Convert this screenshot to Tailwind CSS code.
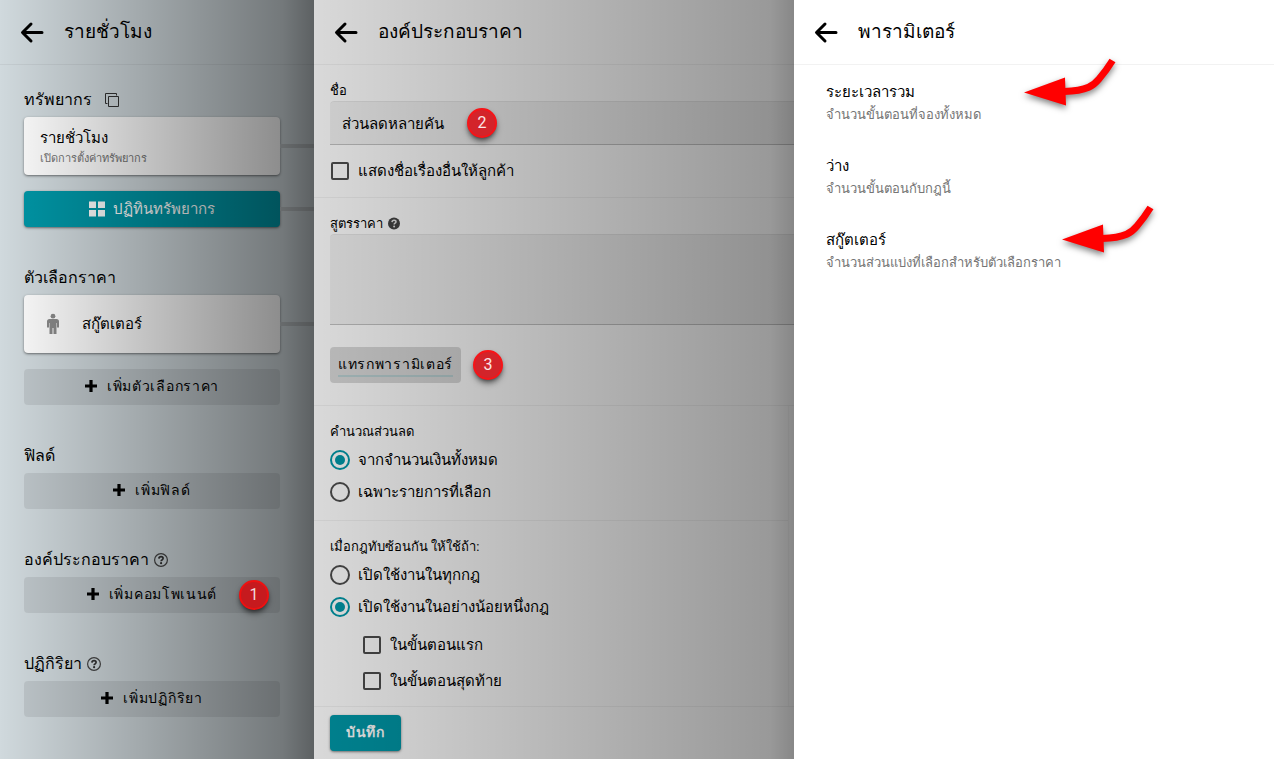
<!DOCTYPE html>
<html lang="th">
<head>
<meta charset="utf-8">
<title>องค์ประกอบราคา</title>
<script src="https://cdn.jsdelivr.net/npm/@tailwindcss/browser@4"></script>
</head>
<body class="h-screen overflow-hidden bg-white font-['Roboto','Liberation_Sans',sans-serif] text-[15px] text-black">

<svg class="hidden">
  <symbol id="back" viewBox="0 0 24 24"><path d="M22 12.500H3M11 4L2.500 12.500l8.500 8.500" fill="none" stroke="#000" stroke-width="3" stroke-linecap="round" stroke-linejoin="round"/></symbol>
  <symbol id="plus" viewBox="0 0 12 12"><path d="M4.400 0h3.200v4.400H12v3.200H7.600V12H4.400V7.600H0V4.400h4.400z"/></symbol>
  <symbol id="help" viewBox="0 0 16 16"><circle cx="8" cy="8" r="6.400" fill="none" stroke="#444" stroke-width="1.200"/><path d="M5.900 6.600q.1-2 2.200-2 2 0 2 1.700 0 1-1.100 1.600-.9.500-.9 1.400" fill="none" stroke="#333" stroke-width="1.700"/><circle cx="8.100" cy="11.200" r="1.100" fill="#333"/></symbol>
</svg>

<div class="flex h-full">

  <!-- Resource panel -->
  <section class="relative flex w-[314px] shrink-0 flex-col bg-[#d2dbdf]">
    <header class="flex h-[65px] shrink-0 items-center gap-5 border-b border-black/5 pl-5">
      <button type="button" aria-label="กลับ" class="size-6"><svg class="size-6"><use href="#back"/></svg></button>
      <h1 class="text-[19px]">รายชั่วโมง</h1>
    </header>
    <div class="flex flex-col gap-8 py-4 pl-6">
      <div>
        <h2 class="flex h-9 items-center gap-3 pt-0.5 text-base">ทรัพยากร
          <button type="button" aria-label="คัดลอก"><svg viewBox="0 0 16 16" class="size-4" fill="none" stroke="#333" stroke-width="1"><path d="M3.500 11.500h-2v-10h11v2M4.500 4.500h10v10h-10z"/></svg></button>
        </h2>
        <div class="flex items-center">
          <a href="#" class="flex h-[58px] w-64 flex-col justify-center rounded bg-white px-4 pt-0.5 shadow-sm shadow-black/40"><span class="leading-6">รายชั่วโมง</span><span class="text-[11px] leading-[18px] text-[#757575]">เปิดการตั้งค่าทรัพยากร</span></a>
          <span class="h-1 flex-1 bg-[#bbc1c4]"></span>
        </div>
        <div class="mt-4 flex items-center">
          <button type="button" class="flex h-9 w-64 items-center justify-center gap-2 rounded bg-[#0097a7] text-white shadow-sm shadow-black/40"><svg viewBox="0 0 16 16" class="size-4" fill="currentColor"><path d="M0 .500h7v6.500H0zM9 .500h7v6.500H9zM0 9h7v6.500H0zM9 9h7v6.500H9z"/></svg>ปฏิทินทรัพยากร</button>
          <span class="h-1 flex-1 bg-[#bbc1c4]"></span>
        </div>
      </div>
      <div>
        <h2 class="flex h-9 items-center pt-0.5 text-base">ตัวเลือกราคา</h2>
        <div class="flex items-center">
          <a href="#" class="flex h-[58px] w-64 items-center gap-5 rounded bg-white pl-5 shadow-sm shadow-black/40"><svg viewBox="0 0 18 22" class="h-[22px] w-[18px]" fill="#8a8a8a"><circle cx="9" cy="3.200" r="2.400"/><path d="M5.500 6h7q2.500 0 2.500 2.500v6h-2V10h-.5v11h-3v-6h-1v6h-3V10H5v4.500H3v-6Q3 6 5.500 6z"/></svg>สกู๊ตเตอร์</a>
          <span class="h-1 flex-1 bg-[#bbc1c4]"></span>
        </div>
        <button type="button" class="mt-4 flex h-9 w-64 items-center justify-center gap-2.5 rounded bg-black/8 pb-0.5 text-sm tracking-wider"><svg class="size-3"><use href="#plus"/></svg>เพิ่มตัวเลือกราคา</button>
      </div>
      <div>
        <h2 class="flex h-9 items-center pt-0.5 text-base">ฟิลด์</h2>
        <button type="button" class="flex h-9 w-64 items-center justify-center gap-2.5 rounded bg-black/8 pb-0.5 text-sm tracking-wider"><svg class="size-3"><use href="#plus"/></svg>เพิ่มฟิลด์</button>
      </div>
      <div>
        <h2 class="flex h-9 items-center gap-1 pt-0.5 text-base">องค์ประกอบราคา <svg class="size-4"><use href="#help"/></svg></h2>
        <div class="relative w-64">
          <button type="button" class="flex h-9 w-64 items-center justify-center gap-2.5 rounded bg-black/8 pb-0.5 text-sm tracking-wider"><svg class="size-3"><use href="#plus"/></svg>เพิ่มคอมโพเนนต์</button>
          <span class="absolute top-[3px] right-[11px] z-20 flex size-[30px] items-center justify-center rounded-full border-2 border-[#ee1111] bg-[#c61a1e] text-base text-[#f0dcdc] shadow-md shadow-black/50">1</span>
        </div>
      </div>
      <div>
        <h2 class="flex h-9 items-center gap-1 pt-0.5 text-base">ปฏิกิริยา <svg class="size-4"><use href="#help"/></svg></h2>
        <button type="button" class="flex h-9 w-64 items-center justify-center gap-2.5 rounded bg-black/8 pb-0.5 text-sm tracking-wider"><svg class="size-3"><use href="#plus"/></svg>เพิ่มปฏิกิริยา</button>
      </div>
    </div>
    <div class="pointer-events-none absolute inset-0 z-10 bg-linear-to-r from-black/1 via-black/45 via-90% to-black/56"></div>
  </section>

  <!-- Price component panel -->
  <section class="relative flex w-[480px] shrink-0 flex-col bg-white">
    <header class="flex h-[65px] shrink-0 items-center gap-5 border-b border-black/5 pl-5">
      <button type="button" aria-label="กลับ" class="size-6"><svg class="size-6"><use href="#back"/></svg></button>
      <h1 class="text-[19px]">องค์ประกอบราคา</h1>
    </header>
    <form class="flex min-h-0 flex-1 flex-col">
      <div class="border-b border-black/5 pt-4 pl-4">
        <label for="name" class="block h-5 text-[13px] leading-5">ชื่อ</label>
        <div class="relative">
          <input id="name" type="text" value="ส่วนลดหลายคัน" class="h-11 w-full rounded-tl border-b border-black/20 bg-black/5 px-3 pt-0.5 inset-shadow-2xs outline-none">
          <span class="absolute top-[7px] left-[137px] z-20 flex size-[30px] items-center justify-center rounded-full border-2 border-[#f71418] bg-[#d3242a] text-base text-[#fbe6e6] shadow-md shadow-black/50">2</span>
        </div>
        <label class="flex h-[52px] items-center gap-[9px] pl-px"><input type="checkbox" class="size-[18px] appearance-none rounded-xs border-2 border-[#4c4c4c]">แสดงชื่อเรื่องอื่นให้ลูกค้า</label>
      </div>
      <div class="border-b border-black/5 pt-4 pb-[22px] pl-4">
        <label for="formula" class="flex h-5 items-center gap-1 text-[13px]">สูตรราคา <svg viewBox="0 0 14 14" class="size-3.5"><circle cx="7" cy="6.500" r="6" fill="#444"/><path d="M5 5.100q.1-1.900 2.100-1.900 1.900 0 1.900 1.500 0 .9-1 1.500-.8.500-.8 1.300" fill="none" stroke="#e4e4e4" stroke-width="1.500"/><circle cx="7.100" cy="9.400" r="1" fill="#e4e4e4"/></svg></label>
        <textarea id="formula" class="block h-[91px] w-full resize-none rounded-tl border-b border-black/20 bg-black/5 p-3 inset-shadow-2xs outline-none"></textarea>
        <div class="mt-[22px] flex items-center gap-3">
          <button type="button" class="h-9 rounded bg-black/15 px-2 text-sm tracking-wider"><span class="block border-b-2 border-[#0097a7]/15 leading-[22px]">แทรกพารามิเตอร์</span></button>
          <span class="z-20 flex size-[30px] items-center justify-center rounded-full border-2 border-[#f71418] bg-[#d3242a] text-base text-[#fbe6e6] shadow-md shadow-black/50">3</span>
        </div>
      </div>
      <div class="mr-[5px] min-h-0 flex-1 border-r border-black/3">
        <fieldset class="border-b border-black/5 pt-4 pb-3 pl-4">
          <legend class="contents"><span class="mb-0.5 block h-5 text-[13px] leading-5">คำนวณส่วนลด</span></legend>
          <label class="flex h-8 items-center gap-2"><input type="radio" name="calc" checked class="size-5 appearance-none rounded-full border-2 border-[#4c4c4c] bg-clip-content p-[3px] checked:border-[#0097a7] checked:bg-[#0097a7]">จากจำนวนเงินทั้งหมด</label>
          <label class="flex h-8 items-center gap-2"><input type="radio" name="calc" class="size-5 appearance-none rounded-full border-2 border-[#4c4c4c] bg-clip-content p-[3px] checked:border-[#0097a7] checked:bg-[#0097a7]">เฉพาะรายการที่เลือก</label>
        </fieldset>
        <fieldset class="pt-4 pl-4">
          <legend class="contents"><span class="mb-0.5 block h-5 text-[13px] leading-5">เมื่อกฎทับซ้อนกัน ให้ใช้ถ้า:</span></legend>
          <label class="flex h-8 items-center gap-2"><input type="radio" name="overlap" class="size-5 appearance-none rounded-full border-2 border-[#4c4c4c] bg-clip-content p-[3px] checked:border-[#0097a7] checked:bg-[#0097a7]">เปิดใช้งานในทุกกฎ</label>
          <label class="flex h-8 items-center gap-2"><input type="radio" name="overlap" checked class="size-5 appearance-none rounded-full border-2 border-[#4c4c4c] bg-clip-content p-[3px] checked:border-[#0097a7] checked:bg-[#0097a7]">เปิดใช้งานในอย่างน้อยหนึ่งกฎ</label>
          <div class="pt-1 pl-[33px]">
            <label class="flex h-9 items-center gap-[9px]"><input type="checkbox" class="size-[18px] appearance-none rounded-xs border-2 border-[#4c4c4c]">ในขั้นตอนแรก</label>
            <label class="flex h-9 items-center gap-[9px]"><input type="checkbox" class="size-[18px] appearance-none rounded-xs border-2 border-[#4c4c4c]">ในขั้นตอนสุดท้าย</label>
          </div>
        </fieldset>
      </div>
      <footer class="border-t border-black/5 px-4 py-2">
        <button type="submit" class="h-9 rounded bg-[#0097a7] px-4 pb-0.5 text-sm font-bold tracking-wider text-white shadow-sm shadow-black/40">บันทึก</button>
      </footer>
    </form>
    <div class="pointer-events-none absolute inset-0 z-10 bg-linear-to-r from-black/15 via-black/40 via-95% to-black/47"></div>
  </section>

  <!-- Parameter panel -->
  <section class="relative min-w-0 flex-1 bg-white">
    <header class="flex h-[65px] items-center gap-5 border-b border-black/5 pl-5">
      <button type="button" aria-label="กลับ" class="size-6"><svg class="size-6"><use href="#back"/></svg></button>
      <h1 class="text-[19px]">พารามิเตอร์</h1>
    </header>
    <ul class="flex flex-col gap-7 px-8 pt-[15px]">
      <li class="flex h-[46px] flex-col"><a href="#" class="leading-6">ระยะเวลารวม</a><span class="text-[13px] leading-[22px] text-[#757575]">จำนวนขั้นตอนที่จองทั้งหมด</span></li>
      <li class="flex h-[46px] flex-col"><a href="#" class="leading-6">ว่าง</a><span class="text-[13px] leading-[22px] text-[#757575]">จำนวนขั้นตอนกับกฎนี้</span></li>
      <li class="flex h-[46px] flex-col"><a href="#" class="leading-6">สกู๊ตเตอร์</a><span class="text-[13px] leading-[22px] text-[#757575]">จำนวนส่วนแบ่งที่เลือกสำหรับตัวเลือกราคา</span></li>
    </ul>
    <svg viewBox="0 0 100 60" class="absolute top-[55px] left-[226px] h-[60px] w-[100px] drop-shadow-md drop-shadow-black/50"><path d="M4 37.500L45 22.500L46 50.500z" fill="#f00"/><path d="M44 36.500C68 36 74 30 79 24Q86 16 92.500 5.500" fill="none" stroke="#f00" stroke-width="7"/></svg>
    <svg viewBox="0 0 100 60" class="absolute top-[202px] left-[264px] h-[60px] w-[100px] drop-shadow-md drop-shadow-black/50"><path d="M4 37.500L45 22.500L46 50.500z" fill="#f00"/><path d="M44 36.500C68 36 74 30 79 24Q86 16 92.500 5.500" fill="none" stroke="#f00" stroke-width="7"/></svg>
  </section>
</div>
</body>
</html>
